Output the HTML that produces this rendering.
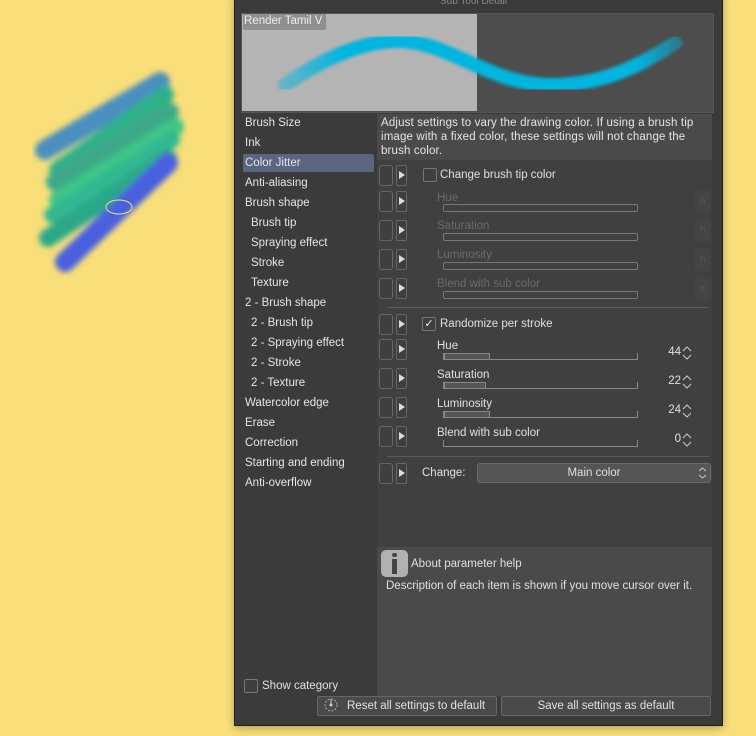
<!DOCTYPE html>
<html><head><style>
body{margin:0;width:756px;height:736px;background:#f9df7a;position:relative;overflow:hidden;font-family:"Liberation Sans",sans-serif;font-size:11.5px;color:#e0e0e0}
.a{position:absolute}
.dlg{left:234px;top:-6px;width:487px;height:730px;background:#3a3a3a;border:1px solid #1e1e1e;box-shadow:0 2px 8px rgba(0,0,0,.3)}
.li{position:absolute;left:245px;font-size:11.5px;color:#e6e6e6}
.bx{position:absolute;width:12px;height:19px;border:1px solid #666;border-radius:3px;background:#3f3f3f}
.ar{position:absolute;width:9px;height:19px;border:1px solid #666;border-radius:2px;background:#3f3f3f}
.ar:after{content:"";position:absolute;left:2px;top:5px;border-left:6px solid #ddd;border-top:4px solid transparent;border-bottom:4px solid transparent}
.lbl{position:absolute;left:437px}
.dim{color:#6a6a6a}
.sl{position:absolute;left:443px;width:193px;height:6px;border:1px solid #777;border-radius:2px}
.sl2{position:absolute;left:443px;width:193px;height:6px;border-bottom:1px solid #888;border-left:1px solid #888;border-right:1px solid #888}
.fill{position:absolute;left:0;top:0;height:5px;background:#555;border:1px solid #888}
.num{position:absolute;right:75px;text-align:right}
.sp{position:absolute;left:682px}
.ic{position:absolute;left:695px;width:15px;height:23px;background:#444;color:#555;font-size:10px;text-align:center;line-height:23px}
.hr{position:absolute;left:387px;width:322px;height:1px;background:#5a5a5a}
.cb{position:absolute;width:12px;height:12px;border:1px solid #777;border-radius:2px;background:#3f3f3f}
</style></head><body>
<svg class="a" style="left:0;top:0" width="230" height="300">
<defs><filter id="b"><feGaussianBlur stdDeviation="3"/></filter></defs>
<g filter="url(#b)" stroke-linecap="round" fill="none">
<path d="M45,150 L160,82" stroke="#4a8fc0" stroke-width="20"/>
<path d="M58,170 L165,95" stroke="#2fb08a" stroke-width="18"/>
<path d="M55,182 L170,112" stroke="#3ca888" stroke-width="18"/>
<path d="M58,200 L175,127" stroke="#3cc586" stroke-width="18"/>
<path d="M52,215 L172,140" stroke="#30b890" stroke-width="16"/>
<path d="M48,238 L168,158" stroke="#2aa888" stroke-width="18"/>
<path d="M65,262 L168,163" stroke="#4a5fe0" stroke-width="20"/>
</g>
<ellipse cx="119" cy="207" rx="13" ry="7" fill="none" stroke="#e8e870" stroke-width="1"/>
</svg>
<div class="a dlg"></div>
<div class="a" style="left:440px;top:-4px;color:#888;font-size:10px">Sub Tool Detail</div>
<div class="a" style="left:241px;top:13px;width:471px;height:98px;background:#4d4d4d;border:1px solid #555"></div>
<div class="a" style="left:242px;top:14px;width:235px;height:97px;background:#b4b4b4"></div>
<svg class="a" style="left:241px;top:13px" width="471" height="98"><defs><filter id="c"><feGaussianBlur stdDeviation="1.5"/></filter>
<linearGradient id="g" x1="0" x2="1"><stop offset="0" stop-color="#00b5df" stop-opacity=".45"/><stop offset=".15" stop-color="#00b5df"/><stop offset=".9" stop-color="#00b5df"/><stop offset="1" stop-color="#00b5df" stop-opacity=".5"/></linearGradient></defs>
<path d="M44,72 C90,40 130,27 160,28 C210,30 250,72 310,72 C370,72 410,45 434,30" stroke="url(#g)" stroke-width="14" fill="none" stroke-linecap="round" filter="url(#c)"/></svg>
<div class="a" style="left:243px;top:14px;width:82px;height:16px;background:#8f8f8f;border-radius:2px;color:#eee;font-size:11.5px;line-height:15px;padding-left:1px;white-space:nowrap;overflow:hidden">Render Tamil V</div>
<div class="a" style="left:241px;top:114px;width:134px;height:582px;background:#3b3b3b"></div>
<div class="a" style="left:377px;top:114px;width:335px;height:582px;background:#404040"></div>
<div class="a" style="left:377px;top:114px;width:335px;height:46px;background:#4a4a4a"></div>
<div class="a" style="left:381px;top:116px;width:325px;line-height:14px;color:#e6e6e6;letter-spacing:.15px">Adjust settings to vary the drawing color. If using a brush tip image with a fixed color, these settings will not change the brush color.</div>
<div class="a" style="left:243px;top:154px;width:131px;height:18px;background:#5b6580;border-radius:2px"></div>
<div class="li" style="top:117px">Brush Size</div>
<div class="li" style="top:137px">Ink</div>
<div class="li" style="top:157px">Color Jitter</div>
<div class="li" style="top:177px">Anti-aliasing</div>
<div class="li" style="top:197px">Brush shape</div>
<div class="li" style="top:217px;left:251px">Brush tip</div>
<div class="li" style="top:237px;left:251px">Spraying effect</div>
<div class="li" style="top:257px;left:251px">Stroke</div>
<div class="li" style="top:277px;left:251px">Texture</div>
<div class="li" style="top:297px">2 - Brush shape</div>
<div class="li" style="top:317px;left:251px">2 - Brush tip</div>
<div class="li" style="top:337px;left:251px">2 - Spraying effect</div>
<div class="li" style="top:357px;left:251px">2 - Stroke</div>
<div class="li" style="top:377px;left:251px">2 - Texture</div>
<div class="li" style="top:397px">Watercolor edge</div>
<div class="li" style="top:417px">Erase</div>
<div class="li" style="top:437px">Correction</div>
<div class="li" style="top:457px">Starting and ending</div>
<div class="li" style="top:477px">Anti-overflow</div>
<div class="bx" style="left:379px;top:165px"></div><div class="ar" style="left:396px;top:165px"></div>
<div class="cb" style="left:423px;top:168px"></div><div class="a" style="left:440px;top:169px">Change brush tip color</div>
<div class="bx" style="left:379px;top:191px"></div><div class="ar" style="left:396px;top:191px"></div>
<div class="lbl dim" style="top:192px">Hue</div><div class="sl" style="top:204px"></div><div class="ic" style="top:190px">ɦ</div>
<div class="bx" style="left:379px;top:220px"></div><div class="ar" style="left:396px;top:220px"></div>
<div class="lbl dim" style="top:220px">Saturation</div><div class="sl" style="top:233px"></div><div class="ic" style="top:219px">ɦ</div>
<div class="bx" style="left:379px;top:249px"></div><div class="ar" style="left:396px;top:249px"></div>
<div class="lbl dim" style="top:249px">Luminosity</div><div class="sl" style="top:262px"></div><div class="ic" style="top:248px">ɦ</div>
<div class="bx" style="left:379px;top:278px"></div><div class="ar" style="left:396px;top:278px"></div>
<div class="lbl dim" style="top:278px">Blend with sub color</div><div class="sl" style="top:291px"></div><div class="ic" style="top:277px">⌀</div>
<div class="hr" style="top:307px"></div>
<div class="bx" style="left:379px;top:314px"></div><div class="ar" style="left:396px;top:314px"></div>
<div class="cb" style="left:422px;top:317px;color:#eee;font-size:11px;line-height:12px;text-align:center">✓</div><div class="a" style="left:440px;top:318px">Randomize per stroke</div>
<div class="bx" style="left:379px;top:339px"></div><div class="ar" style="left:396px;top:339px"></div>
<div class="lbl" style="top:340px">Hue</div><div class="sl2" style="top:353px"><div class="fill" style="width:44px"></div></div><div class="num" style="top:346px">44</div>
<svg class="sp" style="top:345px" width="10" height="16"><path d="M1,6 L5,2 L9,6 M1,10 L5,14 L9,10" stroke="#ccc" fill="none"/></svg>
<div class="bx" style="left:379px;top:368px"></div><div class="ar" style="left:396px;top:368px"></div>
<div class="lbl" style="top:369px">Saturation</div><div class="sl2" style="top:382px"><div class="fill" style="width:40px"></div></div><div class="num" style="top:375px">22</div>
<svg class="sp" style="top:374px" width="10" height="16"><path d="M1,6 L5,2 L9,6 M1,10 L5,14 L9,10" stroke="#ccc" fill="none"/></svg>
<div class="bx" style="left:379px;top:397px"></div><div class="ar" style="left:396px;top:397px"></div>
<div class="lbl" style="top:398px">Luminosity</div><div class="sl2" style="top:411px"><div class="fill" style="width:44px"></div></div><div class="num" style="top:404px">24</div>
<svg class="sp" style="top:403px" width="10" height="16"><path d="M1,6 L5,2 L9,6 M1,10 L5,14 L9,10" stroke="#ccc" fill="none"/></svg>
<div class="bx" style="left:379px;top:426px"></div><div class="ar" style="left:396px;top:426px"></div>
<div class="lbl" style="top:427px">Blend with sub color</div><div class="sl2" style="top:440px"></div><div class="num" style="top:433px">0</div>
<svg class="sp" style="top:432px" width="10" height="16"><path d="M1,6 L5,2 L9,6 M1,10 L5,14 L9,10" stroke="#ccc" fill="none"/></svg>
<div class="hr" style="top:456px"></div>
<div class="bx" style="left:379px;top:463px"></div><div class="ar" style="left:396px;top:463px"></div>
<div class="a" style="left:422px;top:467px">Change:</div>
<div class="a" style="left:477px;top:463px;width:232px;height:18px;background:#555;border:1px solid #6a6a6a;border-radius:3px;text-align:center;line-height:18px">Main color</div>
<svg class="a" style="left:698px;top:466px" width="9" height="14"><path d="M1,5 L4.5,2 L8,5 M1,9 L4.5,12 L8,9" stroke="#ccc" fill="none"/></svg>
<div class="a" style="left:377px;top:547px;width:335px;height:149px;background:#4a4a4a"></div>
<div class="a" style="left:381px;top:550px;width:27px;height:27px;background:#b0b0b0;border-radius:5px"></div>
<div class="a" style="left:392px;top:553px;width:5px;height:4px;background:#444;border-radius:2px"></div>
<div class="a" style="left:392px;top:559px;width:5px;height:15px;background:#444"></div>
<div class="a" style="left:411px;top:558px">About parameter help</div>
<div class="a" style="left:386px;top:580px">Description of each item is shown if you move cursor over it.</div>
<div class="cb" style="left:244px;top:679px"></div><div class="a" style="left:262px;top:680px">Show category</div>
<div class="a" style="left:317px;top:696px;width:178px;height:18px;background:#4a4a4a;border:1px solid #666;border-radius:2px"></div>
<svg class="a" style="left:324px;top:698px" width="14" height="14"><circle cx="7" cy="7" r="6" stroke="#aaa" fill="none" stroke-dasharray="2 1.5"/><circle cx="7" cy="7" r="1.5" fill="#ccc"/><path d="M7,1 L7,6" stroke="#ccc"/></svg>
<div class="a" style="left:347px;top:700px">Reset all settings to default</div>
<div class="a" style="left:501px;top:696px;width:208px;height:18px;background:#4a4a4a;border:1px solid #666;border-radius:2px;text-align:center;line-height:18px">Save all settings as default</div>
</body></html>
